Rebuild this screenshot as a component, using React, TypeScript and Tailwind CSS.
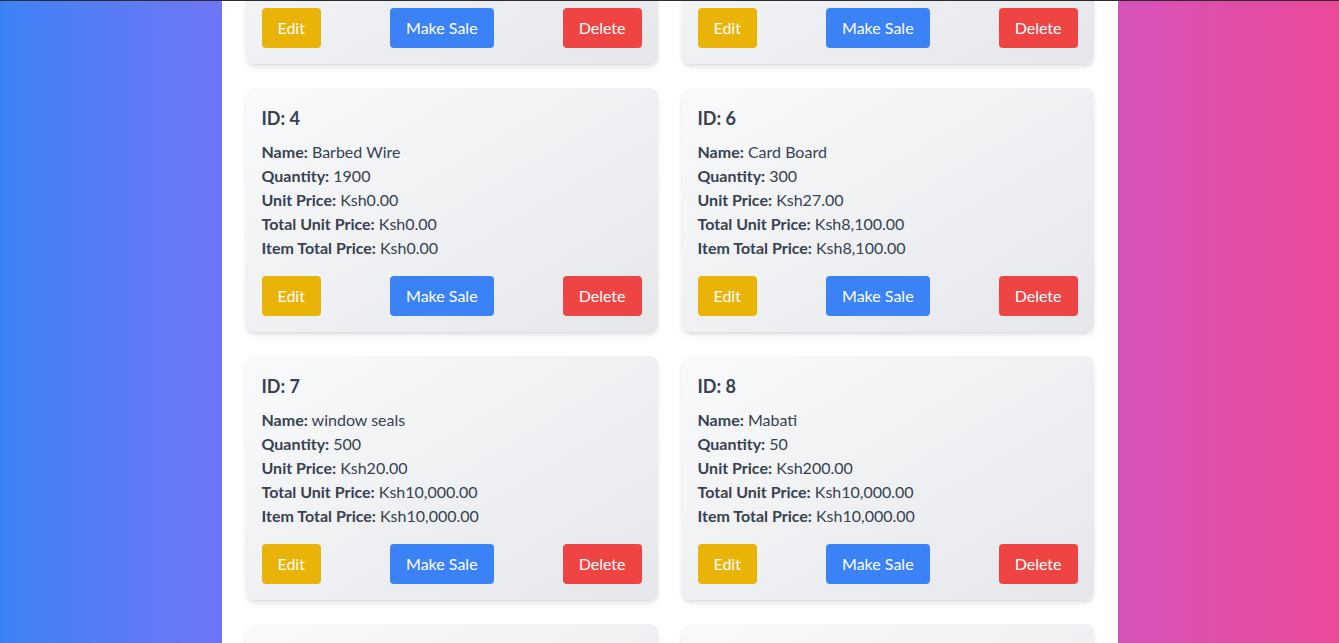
import { useLayoutEffect } from 'react';

interface Item {
  id: number;
  name: string;
  quantity: number;
  unitPrice: number;
}

const items: Item[] = [
  { id: 1, name: 'Cement', quantity: 120, unitPrice: 750 },
  { id: 2, name: 'Nails', quantity: 400, unitPrice: 15 },
  { id: 4, name: 'Barbed Wire', quantity: 1900, unitPrice: 0 },
  { id: 6, name: 'Card Board', quantity: 300, unitPrice: 27 },
  { id: 7, name: 'window seals', quantity: 500, unitPrice: 20 },
  { id: 8, name: 'Mabati', quantity: 50, unitPrice: 200 },
  { id: 9, name: 'Timber', quantity: 80, unitPrice: 350 },
  { id: 10, name: 'Paint', quantity: 60, unitPrice: 900 },
];

const ksh = (n: number) =>
  'Ksh' + n.toLocaleString('en-US', { minimumFractionDigits: 2, maximumFractionDigits: 2 });

const totals: Record<number, number> = { 4: 0, 6: 8100, 7: 10000, 8: 10000 };

export default function App() {
  // page is shown scrolled part way down the list
  useLayoutEffect(() => {
    window.scrollTo(0, 204);
  }, []);

  return (
    <div
      className="min-h-screen bg-gradient-to-r from-[#3b82f6] via-[#a855f7] to-[#ec4899]"
      style={{ fontFamily: 'Lato, "Open Sans", sans-serif' }}
    >
      <div className="fixed top-0 left-0 right-0 h-px bg-[#2b2b30]"></div>
      <div className="max-w-4xl mx-auto bg-white min-h-screen p-6">
        <div className="grid grid-cols-2 gap-6">
          {items.map((item) => {
            const total = totals[item.id] ?? item.quantity * item.unitPrice;
            return (
              <div
                key={item.id}
                className="rounded-lg shadow-md bg-gradient-to-br from-[#f9fafb] to-[#e5e7eb] p-4 text-[#374151]"
              >
                <h3 className="text-lg font-bold mb-2">ID: {item.id}</h3>
                <p><span className="font-bold">Name:</span> {item.name}</p>
                <p><span className="font-bold">Quantity:</span> {item.quantity}</p>
                <p><span className="font-bold">Unit Price:</span> {ksh(item.unitPrice)}</p>
                <p><span className="font-bold">Total Unit Price:</span> {ksh(total)}</p>
                <p><span className="font-bold">Item Total Price:</span> {ksh(total)}</p>
                <div className="flex justify-between mt-4">
                  <button className="bg-[#eab308] text-white px-4 py-2 rounded">Edit</button>
                  <button className="bg-[#3b82f6] text-white px-4 py-2 rounded">Make Sale</button>
                  <button className="bg-[#ef4444] text-white px-4 py-2 rounded">Delete</button>
                </div>
              </div>
            );
          })}
        </div>
      </div>
    </div>
  );
}
